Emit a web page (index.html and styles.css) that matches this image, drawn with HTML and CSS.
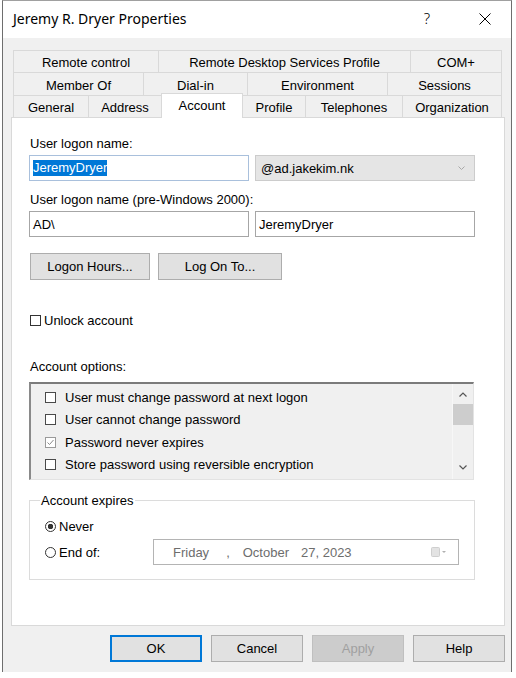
FILE: index.html
```html
<!DOCTYPE html>
<html lang="en">
<head>
<meta charset="utf-8">
<title>Jeremy R. Dryer Properties</title>
<link rel="stylesheet" href="styles.css">
</head>
<body>
<div class="window">
  <div class="titlebar">
    <span class="title">Jeremy R. Dryer Properties</span>
    <span class="help">?</span>
    <svg class="close" width="12" height="12" viewBox="0 0 12 12"><path d="M0.5 0.5 L11.5 11.5 M11.5 0.5 L0.5 11.5" stroke="#000" stroke-width="1" fill="none"/></svg>
  </div>
  <div class="body">
    <div class="tabs">
      <div class="tabrow r1">
        <div class="tab t-remote">Remote control</div>
        <div class="tab t-rds">Remote Desktop Services Profile</div>
        <div class="tab t-com">COM+</div>
      </div>
      <div class="tabrow r2">
        <div class="tab t-member">Member Of</div>
        <div class="tab t-dial">Dial-in</div>
        <div class="tab t-env">Environment</div>
        <div class="tab t-sess">Sessions</div>
      </div>
      <div class="tabrow r3">
        <div class="tab t-general">General</div>
        <div class="tab t-address">Address</div>
        <div class="tab t-account sel">Account</div>
        <div class="tab t-profile">Profile</div>
        <div class="tab t-tel">Telephones</div>
        <div class="tab t-org">Organization</div>
      </div>
    </div>
    <div class="panel">
      <div class="label">User logon name:</div>
      <div class="grid2">
        <div class="textbox focus"><span class="seltext">JeremyDryer</span></div>
        <div class="combo"><span>@ad.jakekim.nk</span>
          <svg width="7" height="4" viewBox="0 0 7 4"><path d="M0.5 0.5 L3.5 3.5 L6.5 0.5" stroke="#a8a8a8" fill="none"/></svg>
        </div>
      </div>
      <div class="label l2">User logon name (pre-Windows 2000):</div>
      <div class="grid2">
        <div class="textbox">AD\</div>
        <div class="textbox">JeremyDryer</div>
      </div>
      <div class="btnrow">
        <button class="btn b-hours">Logon Hours...</button>
        <button class="btn b-logon">Log On To...</button>
      </div>
      <div class="unlock">
        <span class="cb cb-dark"></span><span>Unlock account</span>
      </div>
      <div class="label l3">Account options:</div>
      <div class="listbox">
        <div class="items">
          <div class="item"><span class="cb cb-list"></span>User must change password at next logon</div>
          <div class="item"><span class="cb cb-list"></span>User cannot change password</div>
          <div class="item"><span class="cb cb-checked"><svg width="9" height="9" viewBox="0 0 9 9"><path d="M1.5 4.5 L3.5 6.5 L7.5 2" stroke="#8a8a8a" stroke-width="1" fill="none"/></svg></span>Password never expires</div>
          <div class="item"><span class="cb cb-list"></span>Store password using reversible encryption</div>
        </div>
        <div class="scroll">
          <div class="arrow"><svg width="8" height="5" viewBox="0 0 8 5"><path d="M0.5 4.5 L4 1 L7.5 4.5" stroke="#555" stroke-width="1.2" fill="none"/></svg></div>
          <div class="thumb"></div>
          <div class="arrow down"><svg width="8" height="5" viewBox="0 0 8 5"><path d="M0.5 0.5 L4 4 L7.5 0.5" stroke="#555" stroke-width="1.2" fill="none"/></svg></div>
        </div>
      </div>
      <fieldset class="group">
        <legend>Account expires</legend>
        <div class="radio-row never"><span class="radio on"></span>Never</div>
        <div class="radio-row endrow">
          <div class="endof"><span class="radio"></span>End of:</div>
          <div class="date">
            <span class="d-day">Friday</span><span class="d-comma">,</span><span class="d-month">October</span><span class="d-num">27, 2023</span>
            <svg class="cal" width="17" height="10" viewBox="0 0 17 10"><rect x="0.5" y="0.5" width="8" height="9" rx="1" fill="#e3e3e3" stroke="#cfcfcf"/><path d="M11 4 L15 4 L13 6 Z" fill="#b0b0b0"/></svg>
          </div>
        </div>
      </fieldset>
    </div>
    <div class="footer">
      <button class="btn fb default">OK</button>
      <button class="btn fb">Cancel</button>
      <button class="btn fb disabled">Apply</button>
      <button class="btn fb">Help</button>
    </div>
  </div>
</div>
</body>
</html>
```
FILE: styles.css
```css
html, body {
  margin: 0;
  padding: 0;
  background: #ffffff;
}
body {
  font-family: "Liberation Sans", Arial, sans-serif;
  font-size: 13px;
  color: #000;
}
.window {
  margin-left: 2px;
  width: 510px;
  height: 672px;
  box-sizing: border-box;
  border: 1px solid #6e6e6e;
  border-top-color: #a0a0a0;
  border-bottom: none;
  background: #f0f0f0;
  display: flex;
  flex-direction: column;
}
.titlebar {
  height: 37px;
  flex: none;
  background: #fff;
  display: flex;
  align-items: center;
  padding: 0 20px 0 10px;
}
.title {
  flex: 1;
  font-family: "Noto Sans", "Segoe UI", sans-serif;
  font-size: 14px;
  color: #000;
  padding-bottom: 2px;
}
.help {
  width: 20px;
  text-align: center;
  font-family: "Noto Sans", sans-serif;
  font-size: 15px;
  font-weight: 300;
  padding-bottom: 3px;
}
.close {
  margin-left: 42px;
  margin-bottom: 2px;
}
.body {
  flex: 1;
  padding: 12px 0 10px 8px;
  display: flex;
  flex-direction: column;
}
.tabs {
  margin-left: 2px;
  width: 489px;
}
.tabrow {
  display: flex;
  height: 22px;
}
.tabrow.r2 {
  height: 23px;
}
.tab {
  box-sizing: border-box;
  border-left: 1px solid #d9d9d9;
  border-top: 1px solid #d9d9d9;
  background: #f0f0f0;
  display: flex;
  align-items: center;
  justify-content: center;
  padding-top: 2px;
  white-space: nowrap;
}
.tab:last-child {
  border-right: 1px solid #d9d9d9;
}
.t-remote { width: 145px; }
.t-rds { width: 252px; }
.t-com { width: 92px; }
.t-member { width: 130px; }
.t-dial { width: 104px; }
.t-env { width: 140px; }
.t-sess { width: 115px; }
.t-general { width: 75px; }
.t-address { width: 73px; }
.t-account { width: 82px; }
.t-profile { width: 62px; }
.t-tel { width: 97px; }
.t-org { width: 100px; }
.tab.sel {
  position: relative;
  z-index: 1;
  margin-top: -2px;
  height: 25px;
  background: #fff;
  border-right: 1px solid #d9d9d9;
  padding-top: 0;
  padding-bottom: 1px;
}
.tab.sel + .tab {
  border-left: none;
}
.panel {
  width: 494px;
  height: 509px;
  box-sizing: border-box;
  border: 1px solid #d9d9d9;
  background: #fff;
  padding: 18px 29px 0 17px;
  flex: none;
}
.label {
  line-height: 15px;
  height: 15px;
  padding-left: 1px;
}
.label.l2 {
  margin-top: 11px;
}
.label.l3 {
  margin-top: 31px;
}
.grid2 {
  display: grid;
  grid-template-columns: 220px 220px;
  column-gap: 6px;
  margin-top: 4px;
}
.textbox, .combo {
  height: 26px;
  box-sizing: border-box;
  border: 1px solid #a6a6a6;
  background: #fff;
  padding: 0 3px;
  display: flex;
  align-items: center;
  white-space: nowrap;
}
.textbox.focus {
  border-color: #a9c0dc;
}
.seltext {
  background: #0078d7;
  color: #fff;
  line-height: 16px;
}
.combo {
  background: #e5e5e5;
  border-color: #cccccc;
  padding: 0 9px 0 5px;
  justify-content: space-between;
}
.btnrow {
  display: flex;
  gap: 8px;
  margin-top: 16px;
  margin-left: 1px;
}
.btn {
  height: 27px;
  box-sizing: border-box;
  border: 1px solid #adadad;
  background: #e1e1e1;
  font-family: "Liberation Sans", Arial, sans-serif;
  font-size: 13px;
  color: #000;
  padding: 0;
  margin: 0;
  display: flex;
  align-items: center;
  justify-content: center;
}
.b-hours { width: 120px; }
.b-logon { width: 124px; }
.unlock {
  display: flex;
  align-items: center;
  height: 15px;
  margin-top: 33px;
  padding-left: 1px;
}
.cb {
  width: 11px;
  height: 11px;
  box-sizing: border-box;
  border: 1px solid #333;
  background: #fff;
  flex: none;
  display: flex;
  align-items: center;
  justify-content: center;
}
.cb-dark {
  margin-right: 3px;
}
.cb-list, .cb-checked {
  margin-right: 9px;
  border-color: #4a4a4a;
}
.cb-checked {
  border-color: #9a9a9a;
}
.listbox {
  margin-top: 8px;
  width: 445px;
  height: 98px;
  box-sizing: border-box;
  border-style: solid;
  border-width: 2px 1px 1px 2px;
  border-color: #7b7b7b #e3e3e3 #e3e3e3 #8a8a8a;
  background: #f0f0f0;
  display: flex;
}
.items {
  flex: 1;
  padding: 2px 0 0 14px;
}
.item {
  height: 22.5px;
  display: flex;
  align-items: center;
  white-space: nowrap;
}
.scroll {
  width: 20px;
  display: flex;
  flex-direction: column;
  border-left: 1px solid #f7f7f7;
  margin-left: -1px;
}
.arrow {
  height: 20px;
  display: flex;
  align-items: center;
  justify-content: center;
}
.arrow.down {
  margin-top: auto;
  margin-bottom: 2px;
}
.thumb {
  height: 21px;
  background: #cdcdcd;
}
.group {
  margin: 13px 0 0 0;
  min-width: 0;
  width: 446px;
  box-sizing: border-box;
  border: 1px solid #dcdcdc;
  padding: 0 15px 14px 15px;
}
.group legend {
  margin-left: -5px;
  padding: 0 1px;
  line-height: 15px;
}
.radio-row {
  display: flex;
  align-items: center;
}
.never {
  margin-top: 8px;
  height: 20px;
}
.endrow {
  margin-top: 3px;
  height: 26px;
}
.endof {
  width: 108px;
  display: flex;
  align-items: center;
}
.radio {
  width: 11px;
  height: 11px;
  box-sizing: border-box;
  border: 1px solid #333;
  border-radius: 50%;
  background: #fff;
  margin-right: 3px;
  flex: none;
}
.radio.on {
  background: radial-gradient(circle, #333 0 2.5px, #fff 3px);
}
.date {
  width: 306px;
  height: 26px;
  box-sizing: border-box;
  border: 1px solid #b4b4b4;
  background: #fff;
  color: #6d6d6d;
  display: flex;
  align-items: center;
  padding: 0 10px 0 19px;
  white-space: nowrap;
}
.d-comma { margin-left: 17px; }
.d-month { margin-left: 13px; }
.d-num { margin-left: 12px; }
.cal {
  margin-left: auto;
}
.footer {
  display: flex;
  justify-content: flex-end;
  gap: 9px;
  margin-top: 9px;
  width: 494px;
}
.fb {
  width: 92px;
}
.fb.default {
  border: 2px solid #0078d7;
}
.fb.disabled {
  background: #cccccc;
  border-color: #bfbfbf;
  color: #a0a0a0;
}
```
